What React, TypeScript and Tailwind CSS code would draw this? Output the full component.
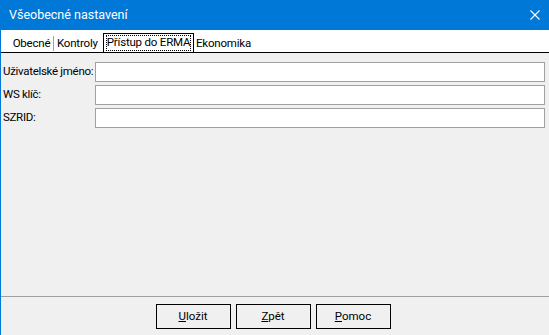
import React from "react";

const font = { fontFamily: 'Roboto, "Noto Sans", sans-serif' };

function Field({ label }: { label: string }) {
  return (
    <div className="flex items-center h-[20px]">
      <div className="w-[94px] pl-[2px] text-[11.5px] tracking-[-0.3px] text-black whitespace-nowrap">
        {label}
      </div>
      <div className="w-[450px] h-[20px] bg-white border border-[#a0a0a0]" />
    </div>
  );
}

function Btn({ u, rest }: { u: string; rest: string }) {
  return (
    <div className="w-[75px] h-[25px] border border-black bg-[#f0f0f0] flex items-center justify-center text-[11.5px] text-black">
      <span>
        <u>{u}</u>
        {rest}
      </span>
    </div>
  );
}

export default function App() {
  return (
    <div
      className="w-[549px] h-[335px] bg-[#f0f0f0] border-l border-[#0078d7] flex flex-col overflow-hidden"
      style={font}
    >
      <div className="h-[30px] bg-[#0078d7] flex items-center justify-between pl-[8px] pr-[9px] shrink-0">
        <span className="text-white text-[12.5px]">Všeobecné nastavení</span>
        <svg width="10" height="10" viewBox="0 0 10 10">
          <path d="M0.5 0.5 L9.5 9.5 M9.5 0.5 L0.5 9.5" stroke="white" strokeWidth="1.1" />
        </svg>
      </div>
      <div className="h-[23px] bg-white border-b border-black flex items-end pl-[10px] shrink-0 text-[11.5px] tracking-[-0.2px] text-black">
        <div className="w-[41px] h-[17px] flex items-center justify-center whitespace-nowrap">Obecné</div>
        <div className="ml-[1px] w-px h-[15px] bg-[#a0a0a0] mb-[1px]" />
        <div className="ml-[3px] w-[44px] h-[17px] flex items-center justify-start whitespace-nowrap">Kontroly</div>
        <div className="ml-[2px] w-[91px] h-[19px] border border-b-0 border-black px-[2px] pt-[1px]">
          <div className="h-[16px] border border-dotted border-black flex items-center justify-center whitespace-nowrap">
            Přístup do ERMA
          </div>
        </div>
        <div className="ml-[2px] h-[17px] flex items-center whitespace-nowrap">Ekonomika</div>
      </div>
      <div className="flex-1 flex flex-col gap-[3px] pt-[9px]">
        <Field label="Uživatelské jméno:" />
        <Field label="WS klíč:" />
        <Field label="SZRID:" />
      </div>
      <div className="h-px bg-[#a0a0a0] shrink-0" />
      <div className="h-[38px] flex justify-center gap-[5px] pt-[7px] pr-[4px] shrink-0">
        <Btn u="U" rest="ložit" />
        <Btn u="Z" rest="pět" />
        <Btn u="P" rest="omoc" />
      </div>
    </div>
  );
}
